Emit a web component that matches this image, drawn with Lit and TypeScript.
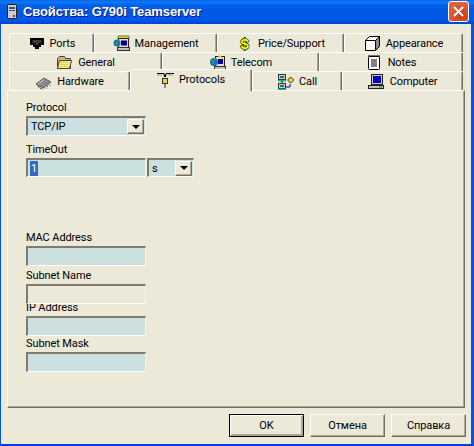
import { LitElement, html, css, svg } from "lit";
import { customElement } from "lit/decorators.js";

const icons: Record<string, unknown> = {
  port: svg`<path d="M2 3h14v7h-3v2h-2v2H7v-2H5v-2H2z" fill="#000"/><path d="M4.500 5h9v3h-3v2h-3V8h-3z" fill="#3a3a3a"/>`,
  mgmt: svg`<path d="M5 1h11v3H5z" fill="#e8d820" stroke="#333" stroke-width=".6"/><rect x="5.500" y="3.500" width="10" height="9" fill="#e4e0c4" stroke="#222"/><rect x="8" y="5.500" width="6" height="5" fill="#0000a0"/><rect x="4.500" y="12.500" width="12" height="3" fill="#c0c0b8" stroke="#333"/><circle cx="4" cy="8" r="3.500" fill="#1a6fc0"/><path d="M1.500 7h3v3H3zM4 5h2v2H4z" fill="#2da02d"/>`,
  price: svg`<text x="8.500" y="14" text-anchor="middle" font-family="'Liberation Sans',sans-serif" font-weight="700" font-size="15" fill="#ffff00" stroke="#000" stroke-width="1.300" paint-order="stroke">$</text>`,
  box: svg`<path d="M1.500 5.500h10v10h-10z" fill="#fff" stroke="#000"/><path d="M1.500 5.500l4-4h10l-4 4z" fill="#fff" stroke="#000"/><path d="M11.500 5.500l4-4v10l-4 4z" fill="#888" stroke="#000"/>`,
  folder: svg`<path d="M1.500 4.500l2-2h5l1 2h5v10h-13z" fill="#c8b878" stroke="#444"/><path d="M3.500 6.500h12l-2 8h-12z" fill="#f4ec80" stroke="#444"/><path d="M5 8.500h8M4.500 10.500h8M4 12.500h8" stroke="#d8b830" stroke-dasharray="1 1"/>`,
  globe: svg`<rect x="6.500" y="2.500" width="9" height="10" fill="#e4e0c4" stroke="#222"/><rect x="9" y="5" width="5" height="5" fill="#0000a0"/><rect x="5.500" y="12.500" width="11" height="3" fill="#c0c0b8" stroke="#333"/><circle cx="5" cy="8" r="4" fill="#1a6fc0"/><path d="M2 6h3v4H3zM5 4h2v2H5z" fill="#2da02d"/><path d="M10 0l1 2 2-1-1 2 2 1-2 1-1-2-2 1z" fill="#f0e020"/>`,
  notes: svg`<rect x="2.500" y="2.500" width="11" height="13" rx="1" fill="#fff" stroke="#000"/><path d="M3 1v2M5 1v2M7 1v2M9 1v2M11 1v2M13 1v2" stroke="#000"/><path d="M5 6h6M5 8h6M5 10h6M5 12h6" stroke="#000"/>`,
  chip: svg`<path d="M1 11l8-6 7 4-8 6z" fill="#8c8c8c" stroke="#444" stroke-width=".8"/><path d="M3 13l1 1.500M5 14.500l1 1.500M7 15.500l1 1M10 14.500l1 1M12 13l1 1M14 11.500l1 1" stroke="#222"/><path d="M3 11l6-4.500" stroke="#c8c8c8"/>`,
  fork: svg`<path d="M0 2h7l1 2 1-2h8v1H9.500L9 6H7L6.500 3H0z" fill="#000"/><path d="M0 4h5M11 4h5" stroke="#999"/><rect x="5.500" y="7.500" width="5" height="5" fill="#e8d040" stroke="#333"/><path d="M7.500 13h1v4h-1z" fill="#333"/>`,
  call: svg`<rect x="1.500" y="1.500" width="7" height="5" fill="#ccc" stroke="#333"/><rect x="3" y="3" width="4" height="2" fill="#008080"/><rect x="1" y="7" width="8" height="1.500" fill="#20b060"/><rect x="1.500" y="10.500" width="7" height="5" fill="#ccc" stroke="#333"/><rect x="3" y="12" width="4" height="2" fill="#008080"/><rect x="1" y="15.500" width="8" height="1.500" fill="#20b060"/><path d="M9 14h4v-3" fill="none" stroke="#0000d0"/><path d="M5 8v2" stroke="#0000d0"/><path d="M11 6l3-2 3 3-3 3-3-2z" fill="#e8d020" stroke="#333" stroke-width=".8"/>`,
  pc: svg`<rect x="3.500" y="1.500" width="11" height="10" fill="#c8c8c8" stroke="#222"/><rect x="5" y="3" width="8" height="7" fill="#0000c0"/><rect x="0.500" y="12.500" width="15" height="3" fill="#c0c0c0" stroke="#222"/><path d="M11 14h3" stroke="#00a000"/>`,
};

const icon = (name: string) =>
  html`<svg class="ico" viewBox="0 0 17 17" width="17" height="17">${icons[name]}</svg>`;

interface Tab { label: string; icon: string; w: number; active?: boolean; }

const rows: Tab[][] = [
  [
    { label: "Ports", icon: "port", w: 85 },
    { label: "Management", icon: "mgmt", w: 123 },
    { label: "Price/Support", icon: "price", w: 127 },
    { label: "Appearance", icon: "box", w: 119 },
  ],
  [
    { label: "General", icon: "folder", w: 153 },
    { label: "Telecom", icon: "globe", w: 157 },
    { label: "Notes", icon: "notes", w: 144 },
  ],
  [
    { label: "Hardware", icon: "chip", w: 121 },
    { label: "Protocols", icon: "fork", w: 122, active: true },
    { label: "Call", icon: "call", w: 90 },
    { label: "Computer", icon: "pc", w: 121 },
  ],
];

@customElement("app-root")
export class AppRoot extends LitElement {
  static styles = css`
    :host {
      display: block;
      width: 474px;
      height: 446px;
      font-family: Roboto, "Liberation Sans", Arial, sans-serif;
      font-size: 11px;
      letter-spacing: -0.1px;
      color: #000;
      overflow: hidden;
    }
    * { box-sizing: border-box; }
    .win {
      width: 474px;
      height: 446px;
      display: flex;
      flex-direction: column;
      background: #ece9d8;
      border-left: 1px solid #0055e5;
      border-right: 3px solid #0055e5;
      border-bottom: 2px solid #0040d8;
    }
    .title {
      height: 24px;
      margin: 0 -3px 0 -1px;
      flex: none;
      display: flex;
      align-items: center;
      padding: 0 5px 1px 5px;
      gap: 5px;
      background: linear-gradient(#0a62e8 0, #0a7cf8 2px, #0260ea 5px, #0057e4 12px, #0058ea 20px, #0042cc 24px);
    }
    .title-text {
      flex: 1;
      color: #fff;
      font: 700 13px "Liberation Sans", sans-serif;
      letter-spacing: -0.1px;
      text-shadow: 1px 1px #0f1089;
      white-space: nowrap;
    }
    .close {
      width: 21px;
      height: 21px;
      border: 1px solid #fff;
      border-radius: 3px;
      background: radial-gradient(circle at 70% 75%, #c83a14, #e2613c 70%);
      display: flex;
      align-items: center;
      justify-content: center;
    }
    .body {
      flex: 1;
      display: flex;
      flex-direction: column;
      padding: 9px 5px 0 6px;
      min-height: 0;
    }
    .tabs {
      flex: none;
      display: flex;
      flex-direction: column;
      padding: 0 0 0 2px;
      position: relative;
      z-index: 1;
    }
    .row { display: flex; height: 19px; }
    .tab {
      flex: none;
      height: 19px;
      display: flex;
      align-items: center;
      justify-content: center;
      gap: 5px;
      padding-top: 1px;
      background: #ece9d8;
      border-top: 1px solid #fff;
      border-left: 1px solid #fff;
      border-right: 1px solid #716f64;
      box-shadow: inset -1px 0 #aca899;
      border-top-left-radius: 2px;
      border-top-right-radius: 2px;
      white-space: nowrap;
    }
    .tab.active {
      height: 22px;
      margin-top: -2px;
      position: relative;
      z-index: 2;
      padding-top: 0;
      padding-bottom: 2px;
    }
    .ico { flex: none; display: block; }
    .panel {
      flex: none;
      height: 318px;
      width: 458px;
      background: #ece9d8;
      border-top: 1px solid #fff;
      border-left: 1px solid #fff;
      border-right: 1px solid #716f64;
      border-bottom: 1px solid #716f64;
      box-shadow: inset -1px -1px #aca899;
      padding: 9px 0 0 18px;
      display: flex;
      flex-direction: column;
    }
    .lbl { height: 16px; line-height: 15px; white-space: nowrap; }
    .lbl.gap6 { margin-top: 6px; }
    .lbl.gap2 { margin-top: 2px; }
    .lbl.far { margin-top: 53px; }
    .lbl.tight { height: 16px; margin-top: -4px; }
    .field {
      width: 120px;
      height: 20px;
      flex: none;
      background: #cce0e0;
      border-top: 2px solid #7f7c6f;
      border-left: 2px solid #7f7c6f;
      border-right: 1px solid #f6f4ec;
      border-bottom: 1px solid #fff;
      display: flex;
      align-items: center;
      padding-left: 3px;
      position: relative;
      z-index: 1;
    }
    .field.off { background: #ece9d8; }
    .field.short { width: 47px; margin-left: 1px; padding-left: 3px; height: 19px; }
    .line { display: flex; }
    .line .field { height: 19px; }
    .sel { padding-right: 1px; }
    .sel span { flex: 1; }
    .arrow {
      width: 17px;
      height: 15px;
      flex: none;
      background: #ece9d8;
      border-top: 1px solid #fff;
      border-left: 1px solid #fff;
      border-right: 1px solid #716f64;
      border-bottom: 1px solid #716f64;
      box-shadow: inset -1px -1px #aca899;
      display: flex;
      align-items: center;
      justify-content: center;
    }
    .tri {
      width: 0;
      height: 0;
      border-left: 4px solid transparent;
      border-right: 4px solid transparent;
      border-top: 4px solid #000;
    }
    .sel-text { background: #316ac5; color: #fff; padding: 0 1px; line-height: 15px; margin-left: -1px; }
    .foot {
      flex: 1;
      display: flex;
      justify-content: flex-end;
      gap: 6px;
      padding: 6px 0 0 0;
    }
    .btn {
      width: 75px;
      height: 23px;
      background: #ece9d8;
      border-top: 1px solid #fff;
      border-left: 1px solid #fff;
      border-right: 1px solid #716f64;
      border-bottom: 1px solid #716f64;
      box-shadow: inset -1px -1px #aca899;
      display: flex;
      align-items: center;
      justify-content: center;
    }
    .btn.def {
      border: 1px solid #000;
      box-shadow: inset 1px 1px #fff, inset -2px -2px #aca899;
    }
  `;

  private field(label: string, cls = "", off = false) {
    return html`<div class="lbl ${cls}">${label}</div>
      <div class="field ${off ? "off" : ""}"></div>`;
  }

  render() {
    return html`
      <div class="win">
        <div class="title">
          <svg class="ico" viewBox="0 0 13 15" width="13" height="15">
            <rect x="2.500" y="0.500" width="9" height="14" rx="1" fill="#c8ccd4" stroke="#222"/>
            <path d="M4 3h6v2H4zM4 6h6v1H4z" fill="#555"/>
            <rect x="8" y="11" width="2" height="2" fill="#d02020"/>
          </svg>
          <div class="title-text">Свойства: G790i Teamserver</div>
          <div class="close">
            <svg viewBox="0 0 13 13" width="13" height="13">
              <path d="M2 2l9 9M11 2l-9 9" stroke="#fff" stroke-width="2"/>
            </svg>
          </div>
        </div>
        <div class="body">
          <div class="tabs">
            ${rows.map(
              (r) => html`<div class="row">
                ${r.map(
                  (t) => html`<div class="tab ${t.active ? "active" : ""}" style="width:${t.w}px">
                    ${icon(t.icon)}<span>${t.label}</span>
                  </div>`
                )}
              </div>`
            )}
          </div>
          <div class="panel">
            <div class="lbl">Protocol</div>
            <div class="field sel">
              <span>TCP/IP</span>
              <div class="arrow"><div class="tri"></div></div>
            </div>
            <div class="lbl gap6">TimeOut</div>
            <div class="line">
              <div class="field"><span class="sel-text">1</span></div>
              <div class="field short sel">
                <span>s</span>
                <div class="arrow"><div class="tri"></div></div>
              </div>
            </div>
            ${this.field("MAC Address", "far")}
            ${this.field("Subnet Name", "gap2", true)}
            ${this.field("IP Address", "tight")}
            ${this.field("Subnet Mask")}
          </div>
          <div class="foot">
            <div class="btn def">OK</div>
            <div class="btn">Отмена</div>
            <div class="btn">Справка</div>
          </div>
        </div>
      </div>
    `;
  }
}
